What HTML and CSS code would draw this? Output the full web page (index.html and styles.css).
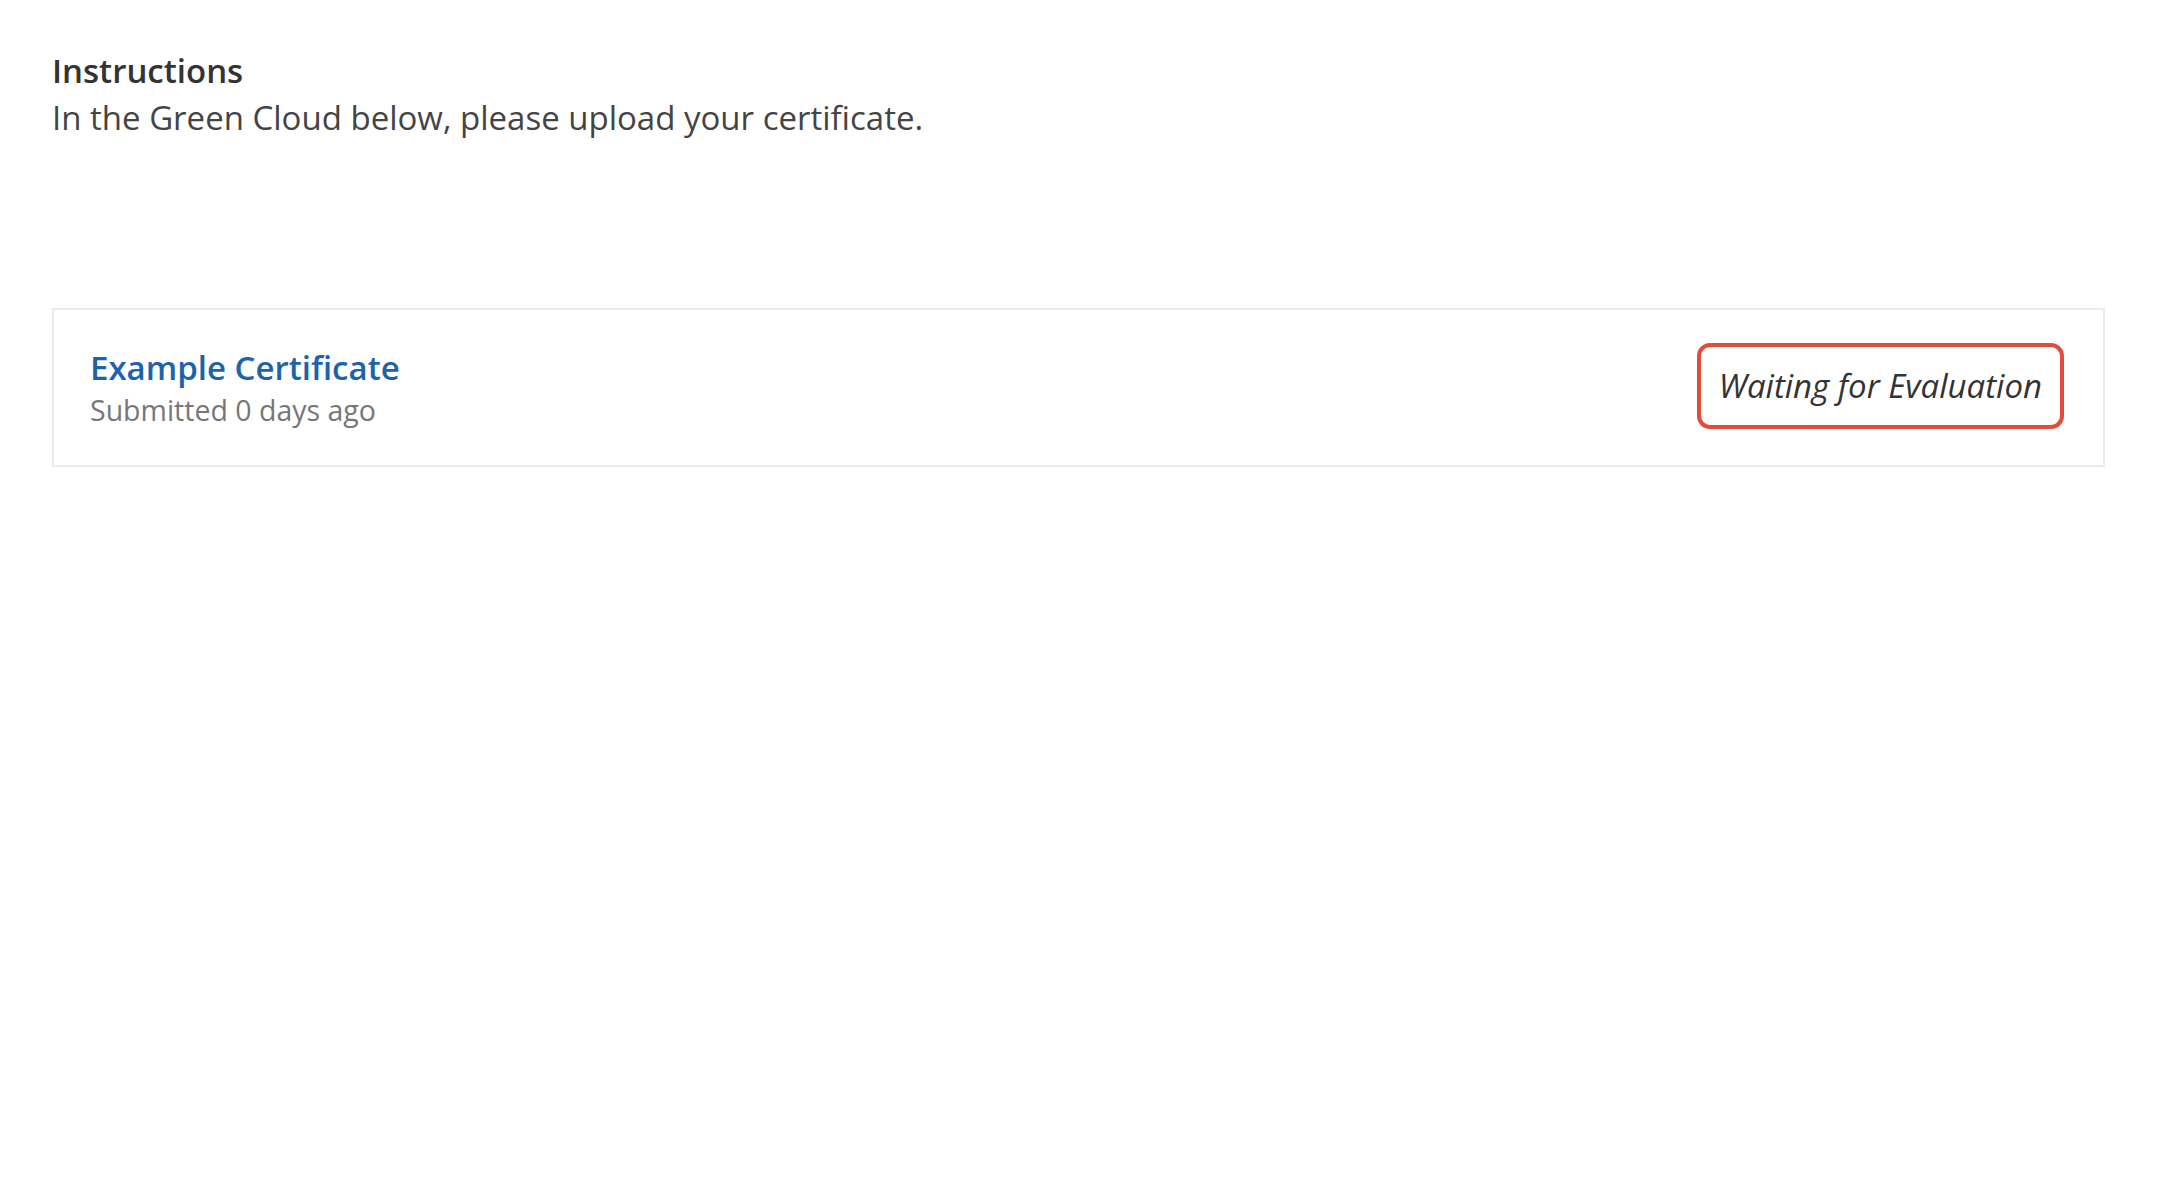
FILE: index.html
```html
<!DOCTYPE html>
<html lang="en">
<head>
<meta charset="utf-8">
<title>Certificate</title>
<link rel="stylesheet" href="styles.css">
</head>
<body>
<main class="page">
  <section class="instructions">
    <h2 class="instructions-title">Instructions</h2>
    <p class="instructions-text">In the Green Cloud below, please upload your certificate.</p>
  </section>
  <section class="submission">
    <div class="submission-info">
      <a class="submission-title" href="#">Example Certificate</a>
      <div class="submission-meta">Submitted 0 days ago</div>
    </div>
    <div class="status-badge">Waiting for Evaluation</div>
  </section>
</main>
</body>
</html>
```
FILE: styles.css
```css
html, body {
  margin: 0;
  padding: 0;
  background: #ffffff;
}
body {
  font-family: "Open Sans", "Noto Sans", sans-serif;
  color: #333333;
}
.page {
  padding: 47px 56px 0 52px;
}
.instructions-title {
  margin: 0;
  font-size: 33px;
  line-height: 47px;
  font-weight: 600;
  color: #333333;
}
.instructions-text {
  margin: 0;
  font-size: 33px;
  line-height: 47px;
  font-weight: 400;
  color: #444444;
}
.submission {
  margin-top: 167px;
  border: 2px solid #ebebeb;
  display: flex;
  align-items: flex-start;
  justify-content: space-between;
  padding: 35px 39px 35px 36px;
}
.submission-info {
  display: flex;
  flex-direction: column;
}
.submission-title {
  font-size: 33px;
  line-height: 45px;
  font-weight: 600;
  color: #1c63ae;
  text-decoration: none;
}
.submission-meta {
  font-size: 28.5px;
  line-height: 40px;
  color: #777777;
}
.status-badge {
  border: 4px solid #e24c3b;
  border-radius: 13px;
  padding: 15px 18px 16px 18px;
  margin-top: -2px;
  font-size: 33px;
  line-height: 47px;
  font-style: italic;
  color: #333333;
}
```
